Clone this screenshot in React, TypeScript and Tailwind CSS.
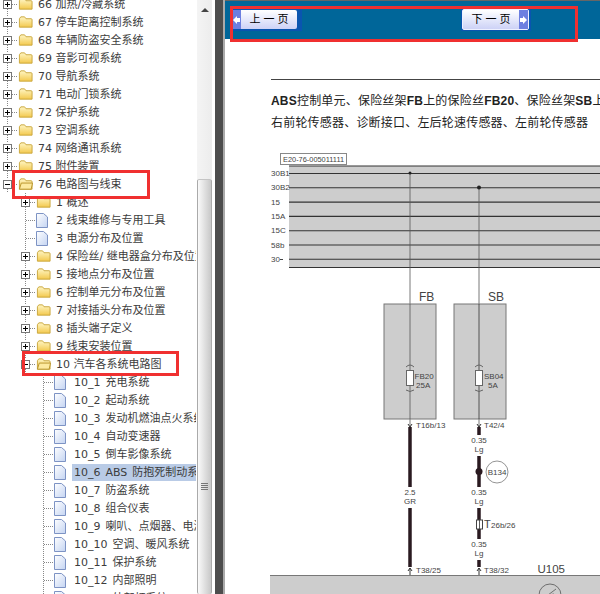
type Row = { label: string; level: 0 | 1 | 2; kind: "closed" | "open" | "page"; selected?: boolean; toggle?: "plus" | "minus" | "none" };

const rows: Row[] = [
  { label: "66 加热/冷藏系统", level: 0, kind: "closed", toggle: "plus" },
  { label: "67 停车距离控制系统", level: 0, kind: "closed", toggle: "plus" },
  { label: "68 车辆防盗安全系统", level: 0, kind: "closed", toggle: "plus" },
  { label: "69 音影可视系统", level: 0, kind: "closed", toggle: "plus" },
  { label: "70 导航系统", level: 0, kind: "closed", toggle: "plus" },
  { label: "71 电动门锁系统", level: 0, kind: "closed", toggle: "plus" },
  { label: "72 保护系统", level: 0, kind: "closed", toggle: "plus" },
  { label: "73 空调系统", level: 0, kind: "closed", toggle: "plus" },
  { label: "74 网络通讯系统", level: 0, kind: "closed", toggle: "plus" },
  { label: "75 附件装置", level: 0, kind: "closed", toggle: "plus" },
  { label: "76 电路图与线束", level: 0, kind: "open", toggle: "minus" },
  { label: "1 概述", level: 1, kind: "closed", toggle: "plus" },
  { label: "2 线束维修与专用工具", level: 1, kind: "page", toggle: "none" },
  { label: "3 电源分布及位置", level: 1, kind: "page", toggle: "none" },
  { label: "4 保险丝/ 继电器盒分布及位置", level: 1, kind: "closed", toggle: "plus" },
  { label: "5 接地点分布及位置", level: 1, kind: "closed", toggle: "plus" },
  { label: "6 控制单元分布及位置", level: 1, kind: "closed", toggle: "plus" },
  { label: "7 对接插头分布及位置", level: 1, kind: "closed", toggle: "plus" },
  { label: "8 插头端子定义", level: 1, kind: "closed", toggle: "plus" },
  { label: "9 线束安装位置", level: 1, kind: "closed", toggle: "plus" },
  { label: "10 汽车各系统电路图", level: 1, kind: "open", toggle: "minus" },
  { label: "10_1 充电系统", level: 2, kind: "page" },
  { label: "10_2 起动系统", level: 2, kind: "page" },
  { label: "10_3 发动机燃油点火系统", level: 2, kind: "page" },
  { label: "10_4 自动变速器", level: 2, kind: "page" },
  { label: "10_5 倒车影像系统", level: 2, kind: "page" },
  { label: "10_6 ABS 防抱死制动系统", level: 2, kind: "page", selected: true },
  { label: "10_7 防盗系统", level: 2, kind: "page" },
  { label: "10_8 组合仪表", level: 2, kind: "page" },
  { label: "10_9 喇叭、点烟器、电源", level: 2, kind: "page" },
  { label: "10_10 空调、暖风系统", level: 2, kind: "page" },
  { label: "10_11 保护系统", level: 2, kind: "page" },
  { label: "10_12 内部照明", level: 2, kind: "page" },
  { label: "10_13 外部灯系统", level: 2, kind: "page" },
];

function Guide({ mode }: { mode: "line" | "branch" | "plus" | "minus" | "empty" }) {
  return (
    <svg width="18" height="18" className="shrink-0 block">
      {mode === "branch" && (
        <path d="M7.5 0V18M8 9.5H18" fill="none" stroke="#888" strokeDasharray="1 1" />
      )}
      {(mode === "plus" || mode === "minus") && (
        <>
          <path d="M7.5 0V4M7.5 14V18M12 9.5H18" fill="none" stroke="#888" strokeDasharray="1 1" />
          <rect x="3.5" y="5.5" width="8" height="8" fill="#fff" stroke="#777" />
          <line x1="5" y1="9.5" x2="10" y2="9.5" stroke="#000" />
          {mode === "plus" && <line x1="7.5" y1="7" x2="7.5" y2="12" stroke="#000" />}
        </>
      )}
    </svg>
  );
}

function Folder({ open }: { open: boolean }) {
  return (
    <svg width="15" height="14" viewBox="0 0 16 14" className="shrink-0 block">
      <defs>
        <linearGradient id="fold" x1="0" y1="0" x2="0" y2="1">
          <stop offset="0" stopColor="#fff6c4" />
          <stop offset="1" stopColor="#f3c94e" />
        </linearGradient>
      </defs>
      <path d="M1.5 3.5 3 1.5H7L8.5 3.5H14Q15 3.5 15 4.5V12.5H1.5Z" fill="url(#fold)" stroke="#c9a53c" />
      {open && <path d="M1.5 12.5 3.5 6H15.5L14 12.5Z" fill="#fdeaa0" stroke="#b8942c" />}
    </svg>
  );
}

function Page() {
  return (
    <svg width="12" height="15" viewBox="0 0 12 15" className="shrink-0 block">
      <defs>
        <linearGradient id="pg" x1="0" y1="0" x2="1" y2="1">
          <stop offset="0" stopColor="#ffffff" />
          <stop offset="1" stopColor="#c4d4f2" />
        </linearGradient>
      </defs>
      <path d="M.5 .5H7.5L11.5 4V14.5H.5Z" fill="url(#pg)" stroke="#7d93c4" />
    </svg>
  );
}

function TreeRow({ row }: { row: Row }) {
  const toggle = row.toggle ?? "none";
  const mark = toggle === "plus" ? "plus" : toggle === "minus" ? "minus" : "branch";
  return (
    <div className="flex h-[18px] items-center whitespace-nowrap">
      {row.level === 0 && <Guide mode={mark} />}
      {row.level === 1 && (
        <>
          <Guide mode="empty" />
          <Guide mode={mark} />
        </>
      )}
      {row.level === 2 && (
        <>
          <Guide mode="empty" />
          <Guide mode="empty" />
          <Guide mode="branch" />
        </>
      )}
      <div className="flex w-[18px] shrink-0 justify-start">
        {row.kind === "page" ? <Page /> : <Folder open={row.kind === "open"} />}
      </div>
      <span
        className={`h-[17px] pl-[2px] pr-1 leading-[17px] ${row.level === 2 ? "[word-spacing:1.5px]" : ""} ${
          row.selected ? "bg-[#b9cbe6]" : ""
        }`}
      >
        {row.label}
      </span>
    </div>
  );
}

function Scrollbar() {
  return (
    <div className="flex w-[19px] shrink-0 flex-col bg-white pl-[1px] pr-[3px]">
      <div className="flex h-[179px] flex-col items-center bg-gradient-to-r from-[#f4f4f4] to-[#ececec] pt-[8px]">
        <div className="h-0 w-0 border-x-[4px] border-b-[4px] border-x-transparent border-b-[#444]" />
      </div>
      <div className="flex flex-1 items-start justify-center rounded-[2px] border-x border-t border-x-[#aaa] border-t-[#c4c4c4] bg-gradient-to-r from-[#fafafa] to-[#c8c8c8] pt-[303px]">
        <div className="flex w-[7px] flex-col gap-[1px]">
          <div className="h-px bg-[#777]" />
          <div className="h-px bg-[#777]" />
          <div className="h-px bg-[#777]" />
          <div className="h-px bg-[#777]" />
        </div>
      </div>
    </div>
  );
}

function NavButton({ label, dir }: { label: string; dir: "prev" | "next" }) {
  const arrow = (
    <div className="flex w-[9px] items-center justify-center bg-[#6c7fe0]">
      <svg width="7" height="8" viewBox="0 0 7 8">
        <path d={dir === "prev" ? "M0 4 4 0V2H7V6H4V8Z" : "M7 4 3 0V2H0V6H3V8Z"} fill="#fff" />
      </svg>
    </div>
  );
  const box =
    dir === "prev"
      ? "w-[70px] pr-[5px] pt-[1px]"
      : "w-[70px] pl-[1px] pr-[2px]";
  const inner = dir === "prev" ? "h-[19px]" : "h-[21px] border border-[#eef0ff]";
  return (
    <div className={`h-[22px] shrink-0 bg-[#0a55b0] ${box}`}>
      <div className={`flex rounded-[2px] bg-gradient-to-b from-[#ffffff] to-[#cdd2f6] text-[11px] text-black ${inner}`}>
        {dir === "prev" && arrow}
        <div className="flex flex-1 items-center justify-center whitespace-pre">{label}</div>
        {dir === "next" && arrow}
      </div>
    </div>
  );
}

const busLabels = ["30B1", "30B2", "15", "15A", "15C", "58b", "30"];

function Schematic() {
  const g = "#333";
  const txt = { fontFamily: "'Liberation Sans', sans-serif", fill: "#444" };
  const wire = "#2a1a20";
  return (
    <svg width="330" height="446" viewBox="270 148 330 446" className="block">
      <rect x="280.5" y="152.5" width="66" height="11" fill="#fff" stroke="#888" />
      <text x="283" y="161" fontSize="7.4" {...txt}>E20-76-005011111</text>

      <rect x="289" y="165" width="311" height="102" fill="#cdcdcd" />
      <line x1="289" y1="165" x2="600" y2="165" stroke={g} />
      {busLabels.map((b, i) => {
        const y = 172.5 + i * 14.3;
        return (
          <g key={b}>
            <text x="271" y={y + 2.5} fontSize="8" {...txt}>{b}</text>
            <line x1="289" y1={y} x2="600" y2={y} stroke={g} strokeWidth="1.1" />
          </g>
        );
      })}
      <line x1="280" y1="258.5" x2="283" y2="258.5" stroke="#444" />
      <line x1="289" y1="266.5" x2="600" y2="266.5" stroke={g} />

      <line x1="410" y1="172" x2="410" y2="426" stroke="#555" strokeWidth="0.8" />
      <line x1="479" y1="186" x2="479" y2="426" stroke="#555" strokeWidth="0.8" />
      <circle cx="410" cy="172" r="1.5" fill="#222" />
      <circle cx="479" cy="186.5" r="2" fill="#222" />

      <text x="419" y="300" fontSize="12" {...txt}>FB</text>
      <text x="488" y="300" fontSize="12" {...txt}>SB</text>
      <rect x="384" y="303" width="52" height="115" fill="#cdcdcd" stroke="#777" />
      <rect x="454" y="303" width="52" height="115" fill="#cdcdcd" stroke="#777" />
      <line x1="410" y1="303" x2="410" y2="418" stroke="#555" strokeWidth="0.8" />
      <line x1="479" y1="303" x2="479" y2="418" stroke="#333" strokeWidth="0.8" />

      <rect x="406.5" y="369.5" width="7" height="15" fill="#fff" stroke="#666" />
      <rect x="475.5" y="369.5" width="7" height="15" fill="#fff" stroke="#666" />
      <path d="M406 366Q410 362 414 366M406 389Q410 392 414 389M475 366Q479 362 483 366M475 389Q479 392 483 389" fill="none" stroke="#666" />
      <text x="414.5" y="378" fontSize="8" {...txt}>FB20</text>
      <text x="416" y="387" fontSize="8" {...txt}>25A</text>
      <text x="484" y="378" fontSize="8" {...txt}>SB04</text>
      <text x="488" y="387" fontSize="8" {...txt}>5A</text>

      <text x="416" y="427" fontSize="8" {...txt}>T16b/13</text>
      <text x="484" y="427" fontSize="8" {...txt}>T42/4</text>
      <path d="M408 423 410 426 412 423M477 423 479 426 481 423" fill="none" stroke="#333" />

      <line x1="410" y1="426" x2="410" y2="486" stroke={wire} strokeWidth="3.5" />
      <line x1="410" y1="507" x2="410" y2="566" stroke={wire} strokeWidth="3.5" />
      <line x1="479" y1="426" x2="479" y2="434" stroke={wire} strokeWidth="3.5" />
      <line x1="479" y1="455" x2="479" y2="486" stroke={wire} strokeWidth="3.5" />
      <line x1="479" y1="507" x2="479" y2="538" stroke={wire} strokeWidth="3.5" />
      <line x1="479" y1="559" x2="479" y2="566" stroke={wire} strokeWidth="3.5" />

      <text x="410" y="494" fontSize="8" textAnchor="middle" {...txt}>2.5</text>
      <text x="410" y="503" fontSize="8" textAnchor="middle" {...txt}>GR</text>
      {[442, 494, 546].map((y) => (
        <g key={y}>
          <text x="479" y={y} fontSize="8" textAnchor="middle" {...txt}>0.35</text>
          <text x="479" y={y + 9} fontSize="8" textAnchor="middle" {...txt}>Lg</text>
        </g>
      ))}

      <circle cx="479" cy="470.5" r="3.5" fill={wire} />
      <circle cx="497" cy="471" r="11" fill="#fff" stroke="#666" strokeWidth="0.7" />
      <text x="497" y="474" fontSize="8" textAnchor="middle" {...txt}>B134</text>

      <rect x="476.5" y="519" width="6" height="9" fill="#fff" stroke="#444" />
      <line x1="479.5" y1="518" x2="479.5" y2="529" stroke="#333" strokeWidth="0.8" />
      <text x="484" y="527" fontSize="11" {...txt}>T</text>
      <text x="491" y="527" fontSize="8" {...txt}>26b/26</text>

      <path d="M408 570 410 567 412 570M410 567V574M477 570 479 567 481 570M479 567V574" fill="none" stroke="#333" />
      <text x="416" y="572" fontSize="8" {...txt}>T38/25</text>
      <text x="484" y="572" fontSize="8" {...txt}>T38/32</text>
      <text x="537.5" y="571.5" fontSize="11.5" {...txt}>U105</text>

      <rect x="270" y="574" width="330" height="22" fill="#cdcdcd" />
      <line x1="270" y1="574.5" x2="600" y2="574.5" stroke="#777" />
      <circle cx="550" cy="594" r="11" fill="none" stroke="#555" strokeWidth="0.8" />
      <path d="M548 594 556 588M548 594 554 593" fill="none" stroke="#555" strokeWidth="0.8" />
    </svg>
  );
}

export default function App() {
  return (
    <div className="relative flex h-[594px] w-[600px] overflow-hidden bg-white text-[11px] text-[#3c3c3c]">
      <div className="w-[196px] shrink-0 overflow-hidden font-['DejaVu_Sans','Noto_Sans_CJK_SC',sans-serif]">
        <div className="-mt-[5px]">
          {rows.map((r) => (
            <TreeRow key={r.label} row={r} />
          ))}
        </div>
      </div>
      <Scrollbar />
      <div className="w-[10px] shrink-0 border-r-2 border-r-[#aaa] bg-[#4d4d4d]" />

      <div className="flex min-w-0 flex-1 flex-col border-t border-t-[#666] font-['Liberation_Sans','Noto_Sans_CJK_SC',sans-serif]">
        <div className="flex h-[38px] shrink-0 items-start gap-[159px] bg-[#006699] pl-[7px] pt-[8px]">
          <NavButton label="上 一 页" dir="prev" />
          <NavButton label="下 一 页" dir="next" />
        </div>
        <div className="flex-1 overflow-hidden pl-[46px] pt-[40px]">
          <div className="h-px bg-[#444]" />
          <p className="mt-[10px] whitespace-nowrap text-[12px] leading-[22px] tracking-[0.2px] text-[#222]">
            <b>ABS</b>控制单元、保险丝架<b>FB</b>上的保险丝<b>FB20</b>、保险丝架<b>SB</b>上的保险丝
          </p>
          <p className="whitespace-nowrap text-[12px] leading-[22px] tracking-[0.2px] text-[#222]">
            右前轮传感器、诊断接口、左后轮速传感器、左前轮传感器
          </p>
          <div className="-ml-[1px] mt-[15px]">
            <Schematic />
          </div>
        </div>
      </div>

      {/* red annotation boxes */}
      <div className="absolute left-[12px] top-[170px] h-[29px] w-[138px] border-[3px] border-[#f03030]" />
      <div className="absolute left-[22px] top-[351px] h-[25px] w-[157px] border-[3px] border-[#f03030]" />
      <div className="absolute left-[230px] top-[6px] h-[36px] w-[348px] border-[3px] border-[#f03030]" />
    </div>
  );
}
